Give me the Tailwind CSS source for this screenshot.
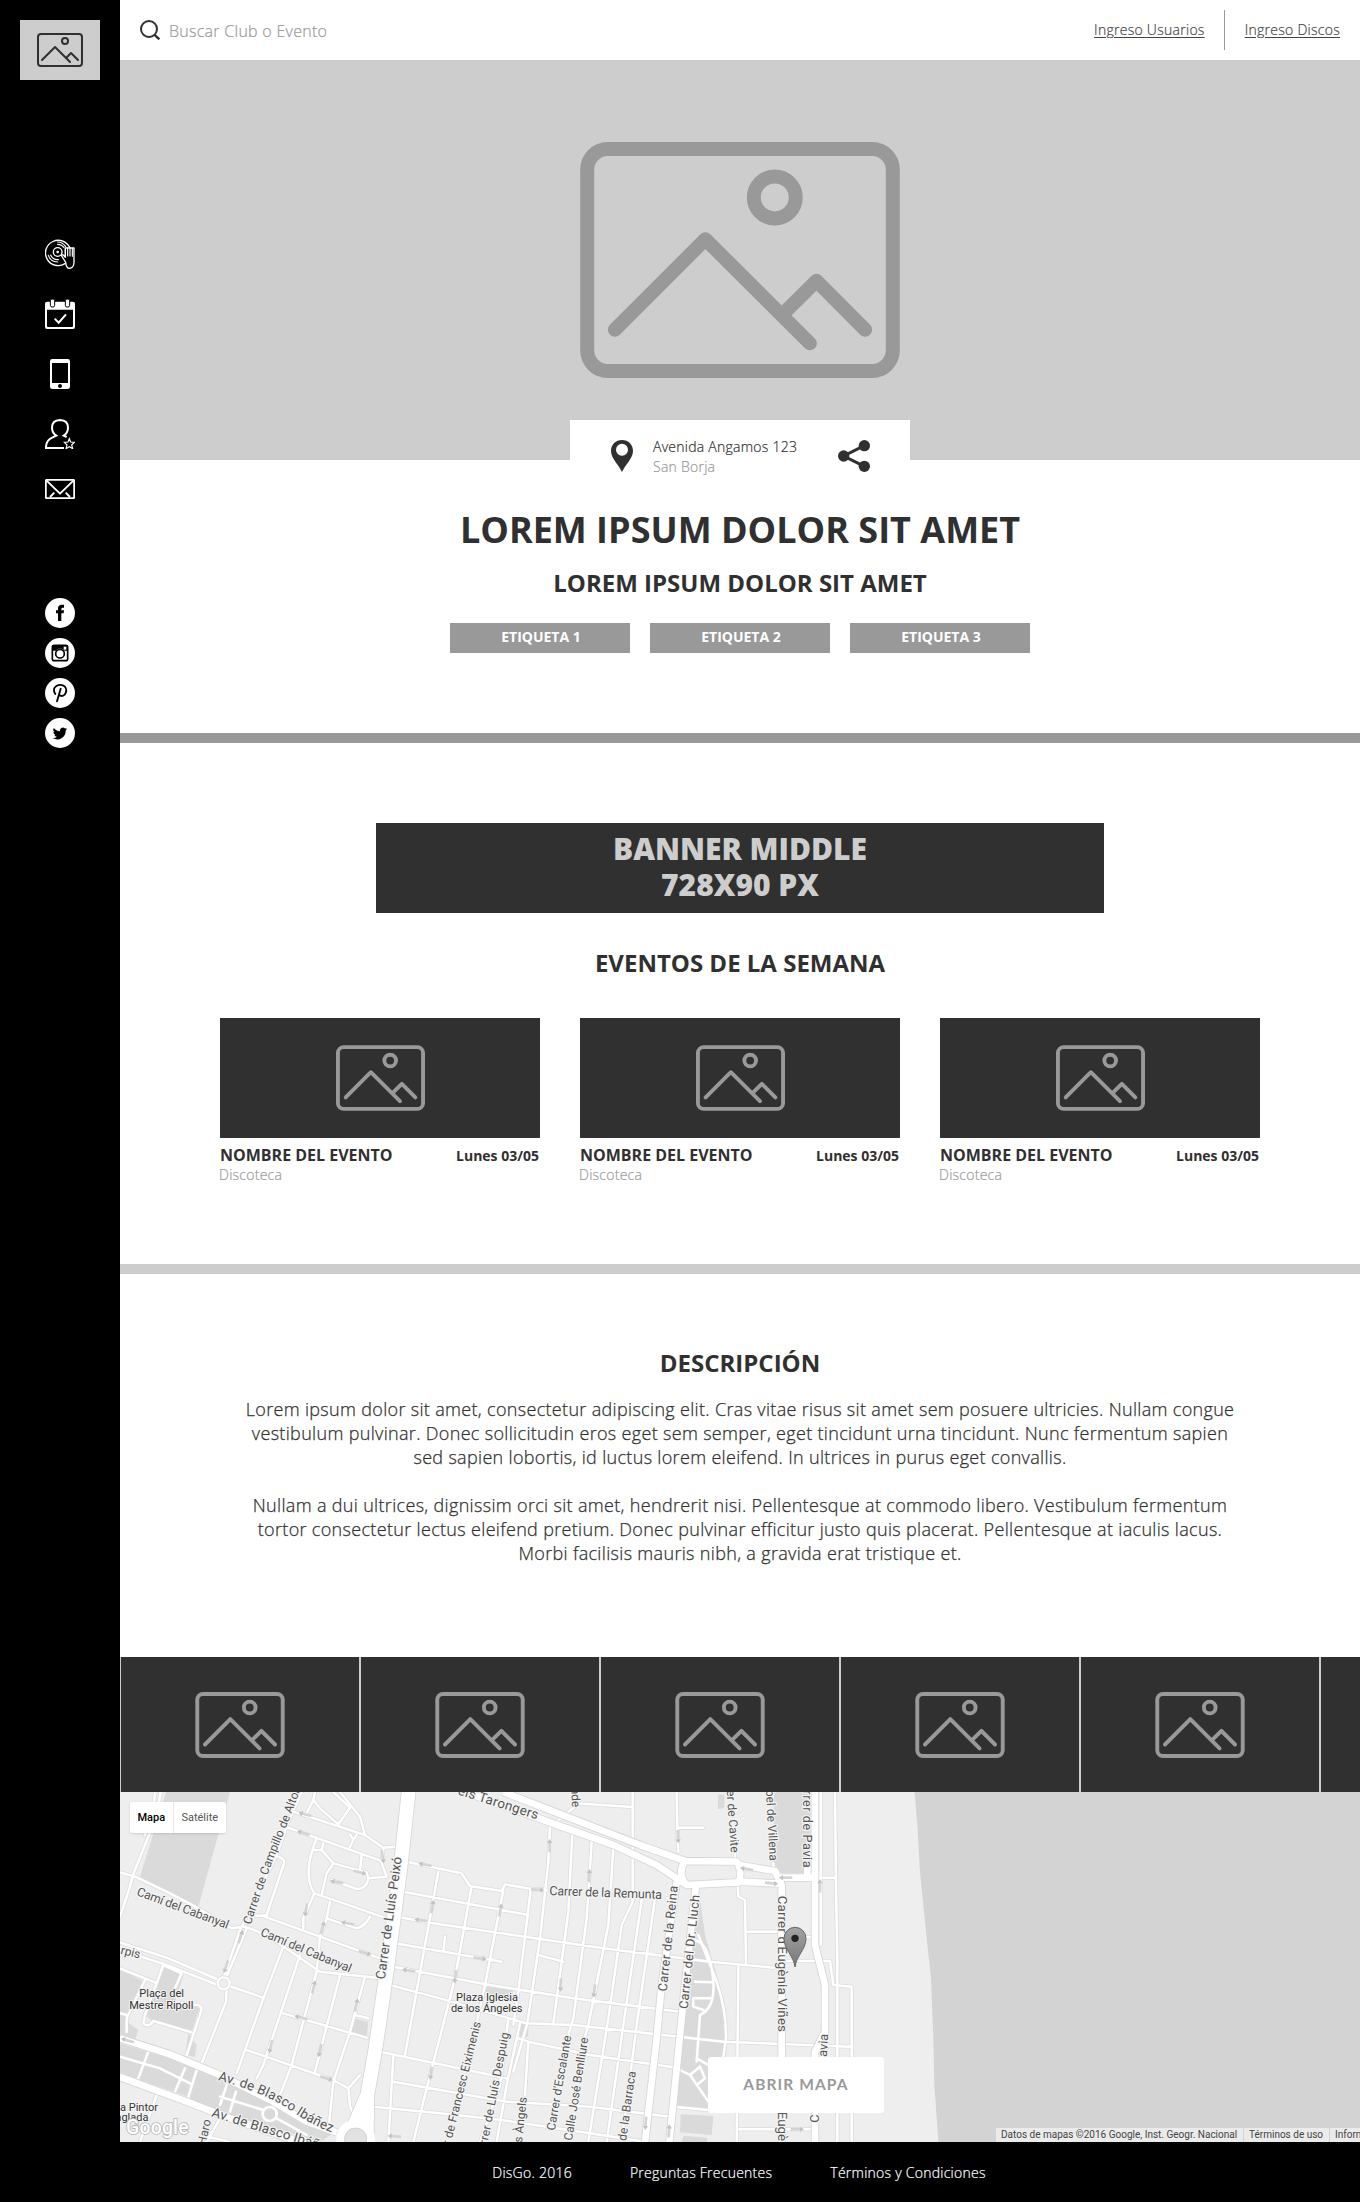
<!DOCTYPE html>
<html lang="es">
<head>
<meta charset="utf-8">
<title>DisGo</title>
<script src="https://cdn.jsdelivr.net/npm/@tailwindcss/browser@4"></script>
</head>
<body class="bg-black font-['Open_Sans',sans-serif] text-[#303030]">

<!-- shared symbols -->
<svg class="hidden">
  <symbol id="pic" viewBox="60 65 960 709">
    <g fill="none" stroke="currentColor" stroke-width="42" stroke-linecap="round" stroke-linejoin="round">
      <rect x="81" y="86" width="918" height="667" rx="62"/>
      <circle cx="644.5" cy="231.5" r="63"/>
      <path d="M164 629 436 357 750 670M666 585 770 482 916 629"/>
    </g>
  </symbol>
</svg>

<div class="flex w-[1360px]">
  <aside class="flex w-[120px] shrink-0 flex-col items-center bg-black pt-5 text-white">
    <div class="flex h-[60px] w-20 items-center justify-center bg-[#cdcdcd] text-[#303030]"><svg class="h-[34px] w-[46px]"><use href="#pic"/></svg></div>

    <nav class="mt-[159px] flex flex-col items-center gap-[30px]">
      <!-- turntable -->
      <svg class="size-[30px]" viewBox="0 0 90 90" fill="none" stroke="currentColor" stroke-width="4" stroke-linecap="round" stroke-linejoin="round">
        <path d="M60 74A38 38 0 1 1 75 28"/>
        <circle cx="38" cy="39" r="13"/><circle cx="38" cy="39" r="4" fill="currentColor" stroke="none"/>
        <path d="M38 9a30 30 0 0 1 24 14M38 16a23 23 0 0 1 19 10M38 69a30 30 0 0 1-28-20M40 62a23 23 0 0 1-23-14" stroke-width="3.5"/>
        <path d="M62 70 50 51q-1-6 5-3l6 7V27h26v44q-1 16-14 17-9 0-11-18z" fill="#000"/>
        <path d="M61 30v22M68 27v24M75 27v24M82 28v24" stroke-width="3.5"/>
      </svg>
      <!-- calendar -->
      <svg class="size-[30px]" viewBox="0 0 90 90">
        <path fill="currentColor" fill-rule="evenodd" d="M6 8h78q6 0 6 6v70q0 6-6 6H6q-6 0-6-6V14q0-6 6-6zM6 32v50q0 2 3 2h72q3 0 3-2V32z"/>
        <g fill="currentColor" stroke="#000" stroke-width="3"><rect x="16" y="0" width="13" height="24" rx="5"/><rect x="61" y="0" width="13" height="24" rx="5"/></g>
        <path fill="none" stroke="currentColor" stroke-width="6" d="m29 59 12 12 22-25"/>
      </svg>
      <!-- mobile -->
      <svg class="h-[30px] w-5" viewBox="0 0 60 90"><path fill="currentColor" fill-rule="evenodd" d="M7 0h46q7 0 7 7v76q0 7-7 7H7q-7 0-7-7V7q0-7 7-7zM6 12v60h48V12z"/><circle cx="30" cy="81" r="6" fill="#000"/></svg>
      <!-- user -->
      <svg class="size-[30px]" viewBox="0 0 90 90" fill="none" stroke="currentColor" stroke-width="6">
        <path d="M57 87H3q-1-24 20-32l11-5q-13-9-13-24 0-22 24-23 24 1 24 23 0 15-13 24l9 4"/>
        <path stroke-width="3.5" d="m73 59 4 10 11 1-8 8 3 11-10-6-10 6 3-11-8-8 11-1z"/>
      </svg>
      <!-- mail -->
      <svg class="h-5 w-[30px]" viewBox="0 0 90 60" fill="none" stroke="currentColor" stroke-width="5.5" stroke-linejoin="round">
        <rect x="2.5" y="2.5" width="85" height="55" rx="3"/><path d="m4 4 41 40L86 4M15 54l13-13M75 54 62 41"/>
      </svg>
    </nav>

    <div class="mt-[99px] flex flex-col gap-2.5">
      <svg class="size-[30px]" viewBox="0 0 90 90"><circle cx="45" cy="45" r="45" fill="#fff"/><path d="M39 69V46h-6v-9h6v-6q0-11 12-11h6v9h-4q-4 0-4 4v4h8l-1 9h-7v23z"/></svg>
      <svg class="size-[30px]" viewBox="0 0 90 90"><circle cx="45" cy="45" r="45" fill="#fff"/><rect x="22" y="22" width="46" height="46" rx="6" fill="none" stroke="#000" stroke-width="5"/><path d="M22 38V26q0-4 4-4h42v16H58a16 16 0 0 0-26 0z"/><path fill="#fff" d="M56 26h8v9h-8z"/><circle cx="45" cy="47" r="13" fill="#fff" stroke="#000" stroke-width="5"/></svg>
      <svg class="size-[30px]" viewBox="0 0 90 90"><circle cx="45" cy="45" r="45" fill="#fff"/><path fill="none" stroke="#000" stroke-width="5.5" stroke-linecap="round" d="M31 48q-10-15 3-24 15-8 26 2 8 11-1 24-9 8-17 0M47 32 36 70"/></svg>
      <svg class="size-[30px]" viewBox="0 0 90 90"><circle cx="45" cy="45" r="45" fill="#fff"/><path transform="translate(24 24) scale(1.8)" d="M23.6 4.9c-.9.4-1.800.7-2.800.8 1-.6 1.800-1.600 2.200-2.700-1 .6-2 1-3.100 1.200a4.900 4.900 0 0 0-8.400 4.500C7.400 8.500 3.800 6.500 1.300 3.400A4.900 4.900 0 0 0 2.800 10c-.8 0-1.600-.2-2.200-.6 0 2.300 1.600 4.400 3.900 4.900-.7.200-1.500.2-2.200.1.600 2 2.400 3.400 4.600 3.400A9.900 9.900 0 0 1-.4 19.900a13.900 13.900 0 0 0 21.500-12.400c1-.7 1.800-1.600 2.500-2.600z"/></svg>
    </div>
  </aside>

  <main class="w-[1240px] bg-white">
    <header class="flex h-[60px] items-center pr-5 pl-5 font-light tracking-[0.017em] [-webkit-text-stroke:0.2px]">
      <svg class="size-5" viewBox="0 0 60 60" fill="none" stroke="#303030" stroke-width="6"><circle cx="27" cy="27" r="24"/><path d="m43 44 15 14" stroke-width="7"/></svg>
      <span class="ml-[9px] pt-px text-base leading-6 text-[#999]">Buscar Club o Evento</span>
      <div class="ml-auto flex items-center text-sm text-[#444]">
        <a class="underline underline-offset-2">Ingreso Usuarios</a>
        <span class="mr-5 ml-[19px] h-10 w-px bg-[#999]"></span>
        <a class="underline underline-offset-2">Ingreso Discos</a>
      </div>
    </header>

    <section class="relative flex h-[400px] justify-center bg-[#cdcdcd] pt-[82px]">
      <svg class="h-[236px] w-80 text-[#999]"><use href="#pic"/></svg>
      <div class="absolute top-[360px] left-[450px] flex h-[60px] w-[340px] items-start bg-white pt-[17px] pr-10 pl-[41px]">
        <svg class="mt-[3px] h-8 w-[22px]" viewBox="0 0 66 96"><path fill="#303030" fill-rule="evenodd" d="M33 96C24 74 0 56 0 32 0 14 14 0 33 0s33 14 33 32c0 24-24 42-33 64zM33 11a18 18 0 1 0 0 36 18 18 0 0 0 0-36z"/></svg>
        <div class="ml-5 text-sm leading-5 font-light tracking-[0.018em] [-webkit-text-stroke:0.2px]"><p>Avenida Angamos 123</p><p class="text-[#999]">San Borja</p></div>
        <svg class="mt-[3px] ml-auto size-8" viewBox="0 0 96 96"><g fill="#303030"><circle cx="79" cy="17" r="17"/><circle cx="17" cy="48" r="17"/><circle cx="79" cy="79" r="17"/></g><path fill="none" stroke="#303030" stroke-width="9" d="M79 17 17 48l62 31"/></svg>
      </div>
    </section>

    <section class="flex flex-col items-center pt-[46px] pb-20 font-bold">
      <h1 class="text-4xl leading-12">LOREM IPSUM DOLOR SIT AMET</h1>
      <h2 class="mt-[13px] text-2xl leading-8">LOREM IPSUM DOLOR SIT AMET</h2>
      <div class="mt-6 flex gap-5 text-center text-sm text-white">
        <span class="h-[30px] w-[180px] bg-[#999] pl-0.5 leading-[28px]">ETIQUETA 1</span>
        <span class="h-[30px] w-[180px] bg-[#999] pl-0.5 leading-[28px]">ETIQUETA 2</span>
        <span class="h-[30px] w-[180px] bg-[#999] pl-0.5 leading-[28px]">ETIQUETA 3</span>
      </div>
    </section>
    <div class="h-2.5 bg-[#999]"></div>

    <section class="flex flex-col items-center pt-20 pb-[79px]">
      <div class="flex h-[90px] w-[728px] flex-col items-center justify-center bg-[#303030] pb-[3px] text-[30px] leading-9 font-extrabold text-[#cdcdcd]"><p>BANNER MIDDLE</p><p>728X90 PX</p></div>
      <h2 class="mt-[34px] text-2xl leading-8 font-bold">EVENTOS DE LA SEMANA</h2>
      <div class="mt-[39px] grid w-[1040px] grid-cols-3 gap-10">
        <article>
          <div class="flex h-[120px] items-center justify-center bg-[#303030] text-[#999]"><svg class="h-[66px] w-[89px]"><use href="#pic"/></svg></div>
          <div class="mr-px flex h-[27px] items-baseline justify-between pt-[7px] text-sm leading-5 font-bold"><span class="text-base leading-5">NOMBRE DEL EVENTO</span><span>Lunes 03/05</span></div>
          <p class="-ml-px text-sm leading-5 font-light tracking-[0.018em] text-[#999] [-webkit-text-stroke:0.2px]">Discoteca</p>
        </article>
        <article>
          <div class="flex h-[120px] items-center justify-center bg-[#303030] text-[#999]"><svg class="h-[66px] w-[89px]"><use href="#pic"/></svg></div>
          <div class="mr-px flex h-[27px] items-baseline justify-between pt-[7px] text-sm leading-5 font-bold"><span class="text-base leading-5">NOMBRE DEL EVENTO</span><span>Lunes 03/05</span></div>
          <p class="-ml-px text-sm leading-5 font-light tracking-[0.018em] text-[#999] [-webkit-text-stroke:0.2px]">Discoteca</p>
        </article>
        <article>
          <div class="flex h-[120px] items-center justify-center bg-[#303030] text-[#999]"><svg class="h-[66px] w-[89px]"><use href="#pic"/></svg></div>
          <div class="mr-px flex h-[27px] items-baseline justify-between pt-[7px] text-sm leading-5 font-bold"><span class="text-base leading-5">NOMBRE DEL EVENTO</span><span>Lunes 03/05</span></div>
          <p class="-ml-px text-sm leading-5 font-light tracking-[0.018em] text-[#999] [-webkit-text-stroke:0.2px]">Discoteca</p>
        </article>
      </div>
    </section>
    <div class="h-2.5 bg-[#cdcdcd]"></div>

    <section class="flex h-[383px] flex-col items-center pt-[73px]">
      <h2 class="text-2xl leading-8 font-bold">DESCRIPCIÓN</h2>
      <div class="mt-[18px] flex flex-col gap-6 text-center text-lg leading-6 font-light tracking-[0.018em] whitespace-nowrap [-webkit-text-stroke:0.25px]">
        <p>Lorem ipsum dolor sit amet, consectetur adipiscing elit. Cras vitae risus sit amet sem posuere ultricies. Nullam congue<br>vestibulum pulvinar. Donec sollicitudin eros eget sem semper, eget tincidunt urna tincidunt. Nunc fermentum sapien<br>sed sapien lobortis, id luctus lorem eleifend. In ultrices in purus eget convallis.</p>
        <p>Nullam a dui ultrices, dignissim orci sit amet, hendrerit nisi. Pellentesque at commodo libero. Vestibulum fermentum<br>tortor consectetur lectus eleifend pretium. Donec pulvinar efficitur justo quis placerat. Pellentesque at iaculis lacus.<br>Morbi facilisis mauris nibh, a gravida erat tristique et.</p>
      </div>
    </section>

    <div class="flex h-[135px] gap-0.5 overflow-hidden bg-[#cdcdcd] pl-px text-[#999]">
      <div class="flex w-[238px] shrink-0 items-center justify-center bg-[#303030]"><svg class="h-[66px] w-[90px]"><use href="#pic"/></svg></div>
      <div class="flex w-[238px] shrink-0 items-center justify-center bg-[#303030]"><svg class="h-[66px] w-[90px]"><use href="#pic"/></svg></div>
      <div class="flex w-[238px] shrink-0 items-center justify-center bg-[#303030]"><svg class="h-[66px] w-[90px]"><use href="#pic"/></svg></div>
      <div class="flex w-[238px] shrink-0 items-center justify-center bg-[#303030]"><svg class="h-[66px] w-[90px]"><use href="#pic"/></svg></div>
      <div class="flex w-[238px] shrink-0 items-center justify-center bg-[#303030]"><svg class="h-[66px] w-[90px]"><use href="#pic"/></svg></div>
      <div class="w-[238px] shrink-0 bg-[#303030]"></div>
    </div>

    <section class="relative h-[350px] overflow-hidden bg-[#eee] font-[Roboto,sans-serif]">
      <svg class="block h-[350px] w-[1240px]" viewBox="0 21 3720 1050">
        <defs>
          <linearGradient id="pin" x1="0" y1="0" x2="0" y2="1"><stop offset="0" stop-color="#a3a3a3"/><stop offset="1" stop-color="#777"/></linearGradient>
          <g id="arrow"><path d="M-20 0H10" stroke="#d4d4d4" stroke-width="8"/><path d="M8-8 20 0 8 8z" fill="#c2c2c2"/></g>
          <g id="minor" fill="none" stroke-linejoin="round" stroke-linecap="round">
            <path d="M122 21 112 80 95 130 42 262 25 320 0 395M106 21 96 90 75 150M0 262 45 275 150 325 235 370 335 430 375 425 440 450 600 560 770 578M425 392 600 455 780 520M425 392 440 390 492 235Q496 222 475 215M405 392H440M545 21 505 110 470 210 360 435 310 580M380 430 322 570M0 472 140 518 298 585M0 495 135 538 293 600M328 603 430 638M320 612 318 650 245 835"/>
            <path d="M490 485 430 640 350 865M540 510 430 840 410 880M600 455 590 560 515 840 480 930M660 570 585 860M735 575 690 740 640 890 625 1040M490 685 740 758M380 795 640 885 685 910 720 870M685 910 690 965 700 985M705 690 745 700M0 550 105 592M130 540 185 565 165 610M130 540 75 690 70 715Q85 730 100 708L215 742M75 585 20 700 20 740M0 685 20 690M185 655 235 660Q248 665 243 680L200 810M85 800 55 880M195 850 165 920M0 815 120 850 210 895M235 840 205 935M320 900 300 960M300 935 430 975M348 920 330 980M470 1000 560 1050M110 930 60 1071M300 1000 260 1071M245 1050 330 1071"/>
            <path d="M585 21 580 45 560 85M580 45 600 70 655 118 690 68 640 21M655 118 660 125M660 21 720 95 735 150 790 188 825 185M520 80 735 150M495 125 790 230M690 148 700 165 688 190M700 165 710 150M725 210 720 255M590 160Q545 270 583 325L550 400 550 430M580 195H605L640 235 740 262 745 280 800 275M610 175 605 195M640 235 620 265 605 330M635 285 710 312Q740 312 745 280M583 325 680 358 800 400M630 350 620 400 600 455M620 400 710 430Q735 425 750 395M790 190 785 235 800 275"/>
            <path d="M860 230 1025 265 1050 303 1145 318 1155 298 1235 312 1280 315M850 320 1225 390M830 395 960 418 1260 462 1450 490 1770 530 1960 548M825 475 1145 530M820 545 1110 600 1360 640 1680 680M810 600 960 640 1220 715 1360 720 1810 770 2195 785M780 800 1160 880M1195 760 1225 770 1410 810 1680 850M820 890 1160 950 1410 965 1650 995M760 965 960 985 1145 1005 1410 1045 1580 1071M975 455 970 500M955 260 895 590 855 810M1055 303 1005 580 910 950 880 1071M1150 315 1095 600 1060 760M1232 315 1195 620 1180 720M820 815 805 1071M1165 700 1140 900 1080 1071M1200 715 1160 900 1130 1071M1225 770 1215 930M1290 120 1285 230 1260 460 1222 715 1180 860M1357 145 1345 380 1325 530 1300 715M1415 170 1400 400 1360 700 1345 750M1480 190 1465 420 1405 720 1395 755M1538 21V350L1505 420 1465 700 1405 1071M1565 345 1510 720 1460 1071M1605 340 1550 720 1505 1071M1255 510 1330 530M1370 60V21M1365 55 1538 66M1670 21 1672 130 1675 200M1672 128H1750M1310 110 1370 60"/>
            <path d="M1855 540 1850 1071M1853 300 1855 335 1875 345 1878 540M1878 440H1970M1855 1033H2080M1845 180V220M1960 235V260M2102 21V480M2145 21 2148 300 2152 520V1071M2195 605V1071M2000 528H2130L2140 600 2195 605M2060 278H2145M2060 457H2080M1720 465Q1770 470 1780 590 1785 670 1740 690L1730 830M1735 450 1790 590Q1820 680 1818 760L1810 815M1725 590 1780 592M1720 665V640H1770M1720 665 1750 675M1680 855 1710 870 1765 950M1710 870 1740 845 1755 880 1730 900M1730 820 1765 840M1660 965 1765 975M1660 340 1640 340"/>
          </g>
          <g id="major" fill="none" stroke-linejoin="round">
            <path d="M0 760 150 808 300 870 450 945 560 1010 650 1042M0 876 200 950 330 1000 600 1092M700 1020 707 1030"/>
            <path d="M1150 21 1560 180 1695 228 1850 230Q1866 250 1858 292L1700 300 1610 240 1480 180 1060 30M1858 240 1965 258 1985 300V1071M1858 290 1985 296M1695 228Q1670 270 1700 300M1980 278H2085M2085 21V480L2115 600V740L2085 800V1071M2062 240V278"/>
            <path d="M1670 290 1625 600 1610 760 1575 1071M1728 300 1695 600 1675 800 1648 1071"/>
          </g>
        </defs>

        <path fill="#eee" d="M0 0h3720v1080H0z"/>
        <path fill="#d3d3d3" d="M2382 0 2392 120 2400 260 2416 420 2433 580 2440 760 2443 900 2456 1080H3720V0z"/>
        <!-- parks and squares -->
        <g fill="#dadada">
          <path d="M138 21H330L235 365 60 275zM0 550 70 590 20 710 55 735 45 765 0 750zM130 545 190 570 165 650 240 665 215 740 100 710 75 690zM205 745 230 780 225 815 195 810zM0 775 230 845 205 935 0 865zM235 850 440 930 640 1045 600 1071 280 975 210 940zM700 700 745 710 740 755 690 740zM1100 605 1180 615 1175 640 1095 625zM1200 715 1225 718 1225 755 1195 755z"/>
          <path d="M1740 340 1755 450 1810 640 1820 770 1810 980 1660 965 1675 810 1700 600zM1682 988 1780 993 1775 1050 1680 1042zM1690 1052 1762 1058 1760 1071H1685zM1962 21H2072V265H1985L1960 235zM1795 27 1813 30V70L1793 72z"/>
        </g>
        <use href="#minor" stroke="#dcdcdc" stroke-width="12"/>
        <use href="#minor" stroke="#fff" stroke-width="7.500"/>
        <use href="#major" stroke="#d6d6d6" stroke-width="25"/>
        <path d="M868 0 840 260 800 560 765 800 742 930 690 1050M742 930 740 1080" fill="none" stroke="#d6d6d6" stroke-width="46"/>
        <path d="M868 0 840 260 800 560 765 800 742 930 690 1050M742 930 740 1080" fill="none" stroke="#fff" stroke-width="41"/>
        <use href="#major" stroke="#fff" stroke-width="20"/>
        <circle cx="707" cy="1062" r="46" fill="#dedede" stroke="#fff" stroke-width="24"/>
        <circle cx="707" cy="1062" r="33" fill="#e2e2e2" stroke="#ccc" stroke-width="2"/>
        <circle cx="311" cy="595" r="18" fill="#eee" stroke="#dcdcdc" stroke-width="11"/><circle cx="311" cy="595" r="18" fill="none" stroke="#fff" stroke-width="7"/>
        <circle cx="449" cy="987" r="21" fill="#dadada" stroke="#fff" stroke-width="8"/>

        <!-- one-way arrows -->
        <use href="#arrow" transform="translate(555 88) rotate(195)"/><use href="#arrow" transform="translate(550 144) rotate(198)"/>
        <use href="#arrow" transform="translate(788 215) rotate(82)"/><use href="#arrow" transform="translate(720 262) rotate(14)"/>
        <use href="#arrow" transform="translate(650 291) rotate(190)"/><use href="#arrow" transform="translate(558 375) rotate(100)"/>
        <use href="#arrow" transform="translate(608 428) rotate(-75)"/><use href="#arrow" transform="translate(683 415) rotate(190)"/>
        <use href="#arrow" transform="translate(735 504) rotate(18)"/><use href="#arrow" transform="translate(362 455) rotate(-72)"/>
        <use href="#arrow" transform="translate(318 545) rotate(108)"/><use href="#arrow" transform="translate(581 606) rotate(-77)"/>
        <use href="#arrow" transform="translate(709 660) rotate(-77)"/><use href="#arrow" transform="translate(543 698) rotate(195)"/>
        <use href="#arrow" transform="translate(452 785) rotate(103)"/><use href="#arrow" transform="translate(600 797) rotate(103)"/>
        <use href="#arrow" transform="translate(620 880) rotate(17)"/><use href="#arrow" transform="translate(915 239) rotate(190)"/>
        <use href="#arrow" transform="translate(937 365) rotate(-80)"/><use href="#arrow" transform="translate(903 406) rotate(188)"/>
        <use href="#arrow" transform="translate(1141 375) rotate(-80)"/><use href="#arrow" transform="translate(1080 520) rotate(8)"/>
        <use href="#arrow" transform="translate(866 556) rotate(188)"/><use href="#arrow" transform="translate(1006 575) rotate(98)"/>
        <use href="#arrow" transform="translate(933 865) rotate(98)"/><use href="#arrow" transform="translate(1253 314) rotate(2)"/>
        <use href="#arrow" transform="translate(1289 182) rotate(-90)"/><use href="#arrow" transform="translate(1408 272) rotate(-88)"/>
        <use href="#arrow" transform="translate(1674 155) rotate(88)"/><use href="#arrow" transform="translate(1322 600) rotate(92)"/>
        <use href="#arrow" transform="translate(1423 618) rotate(97)"/><use href="#arrow" transform="translate(2100 303) rotate(-90)"/>
        <use href="#arrow" transform="translate(1880 252) rotate(190)"/><use href="#arrow" transform="translate(1955 295) rotate(6)"/>
        <use href="#arrow" transform="translate(1997 278) rotate(180)"/><use href="#arrow" transform="translate(2032 1033)"/>
        <use href="#arrow" transform="translate(1577 1015) rotate(95)"/><use href="#arrow" transform="translate(1647 1038) rotate(-86)"/>
        <use href="#arrow" transform="translate(823 1054) rotate(185)"/><use href="#arrow" transform="translate(22 766) rotate(197)"/>

        <!-- street names -->
        <g fill="#555" font-size="38" stroke="#f4f4f4" stroke-width="7" stroke-linejoin="round" paint-order="stroke">
          <path id="campillo" d="M392 420 Q440 270 475 185 T550 -10" fill="none" stroke="none"/>
          <text font-size="36"><textPath href="#campillo">Carrer de Campillo de Altobuey</textPath></text>
          <text transform="translate(48 330) rotate(20.500)" font-size="37" textLength="292">Camí del Cabanyal</text>
          <text transform="translate(419 451) rotate(22.500)" font-size="37" textLength="292">Camí del Cabanyal</text>
          <text transform="translate(794 584) rotate(-82)" font-size="40" textLength="370">Carrer de Lluís Peixó</text>
          <text transform="translate(1012 28) rotate(17.500)" font-size="40" textLength="250">els Tarongers</text>
          <text transform="translate(0 506) rotate(14)" font-size="36">rpis</text>
          <path id="blasco" d="M293 886 Q430 920 510 975 T650 1046" fill="none" stroke="none"/>
          <text font-size="40"><textPath href="#blasco" textLength="378">Av. de Blasco Ibáñez</textPath></text>
          <text transform="translate(273 994) rotate(17)" font-size="40" textLength="378">Av. de Blasco Ibáñez</text>
          <text transform="translate(256 1082) rotate(-77)" font-size="36">Haro</text>
          <text transform="translate(991 1082) rotate(-76)" font-size="36" textLength="380">r de Francesc Eiximenis</text>
          <text transform="translate(1098 1100) rotate(-79)" font-size="36" textLength="362">arrer de Lluís Despuig</text>
          <text transform="translate(1206 1074) rotate(-84)" font-size="36" textLength="138">s Àngels</text>
          <text transform="translate(1354 8) rotate(88)" font-size="36">nde</text>
          <text transform="translate(1288 330) rotate(2)" textLength="338">Carrer de la Remunta</text>
          <text transform="translate(1640 620) rotate(-84)" textLength="318">Carrer de la Reina</text>
          <text transform="translate(1703 673) rotate(-84)" textLength="344">Carrer del Dr. Lluch</text>
          <text transform="translate(1304 1038) rotate(-80)" font-size="36" textLength="289">Carrer d'Escalante</text>
          <text transform="translate(1356 1068) rotate(-81)" font-size="36" textLength="313">Calle José Benlliure</text>
          <text transform="translate(1518 1069) rotate(-82)" font-size="36" textLength="211">de la Barraca</text>
          <text transform="translate(1820 16) rotate(86)" font-size="36" textLength="188">er de Cavite</text>
          <text transform="translate(1938 15) rotate(87)" font-size="36" textLength="213">bel de Villena</text>
          <text transform="translate(2050 16) rotate(90)" textLength="232">rrer de Pavia</text>
          <text transform="translate(1973 332) rotate(90)" font-size="40" textLength="409">Carrer d'Eugènia Viñes</text>
          <text transform="translate(2120 816) rotate(-86)">avia</text>
          <text transform="translate(2096 1013) rotate(-90)">C</text>
          <text transform="translate(1973 980) rotate(90)" font-size="40">Eugè</text>
        </g>
        <g fill="#333" font-size="33" text-anchor="middle" stroke="#f4f4f4" stroke-width="6" stroke-linejoin="round" paint-order="stroke">
          <text x="125" y="637">Plaça del</text><text x="124" y="671">Mestre Ripoll</text>
          <text x="1101" y="647">Plaza Iglesia</text><text x="1100" y="680">de los Ángeles</text>
          <g text-anchor="start"><text x="0" y="977">a Pintor</text><text x="-14" y="1008">nglada</text></g>
        </g>
        <text x="18" y="1047" font-size="58" font-weight="500" fill="#fff" stroke="#b5b5b5" stroke-width="5" paint-order="stroke" textLength="188">Google</text>

        <!-- marker -->
        <path d="M2025 546C2021 512 1992 494 1992 460a33 33 0 0 1 66 0C2058 494 2029 512 2025 546z" fill="url(#pin)" stroke="#666" stroke-width="3"/>
        <circle cx="2025" cy="460" r="11" fill="#222"/>
      </svg>

      <div class="absolute top-2.5 left-2.5 flex h-[31px] w-24 rounded-xs bg-white text-[11px] leading-[31px] shadow-sm">
        <span class="w-[43.5px] border-r border-[#e6e6e6] text-center font-medium text-black">Mapa</span>
        <span class="flex-1 text-center text-[#555]">Satélite</span>
      </div>
      <button class="absolute top-[265px] left-[588px] h-14 w-[176px] rounded-[3px] bg-white font-[Lato,sans-serif] text-[15.500px] font-bold tracking-[1.1px] text-[#999]">ABRIR MAPA</button>
      <div class="absolute right-0 bottom-0 flex h-3.5 w-[364px] overflow-hidden text-[10px] leading-[14px] whitespace-nowrap text-[#444]">
        <span class="w-[247px] shrink-0 bg-[#ebebeb] pl-[5px]">Datos de mapas ©2016 Google, Inst. Geogr. Nacional</span>
        <span class="ml-px w-[85px] shrink-0 bg-[#ebebeb] pl-[5px]">Términos de uso</span>
        <span class="ml-px w-[120px] shrink-0 bg-[#ebebeb] pl-[5px]">Informar de un error</span>
      </div>
    </section>
  </main>
</div>

<footer class="flex h-[60px] w-[1360px] items-center justify-center gap-[58px] bg-black pt-px pl-[118px] text-sm font-light tracking-[0.018em] text-white [-webkit-text-stroke:0.2px]">
  <span>DisGo. 2016</span><span>Preguntas Frecuentes</span><span>Términos y Condiciones</span>
</footer>
</body>
</html>
